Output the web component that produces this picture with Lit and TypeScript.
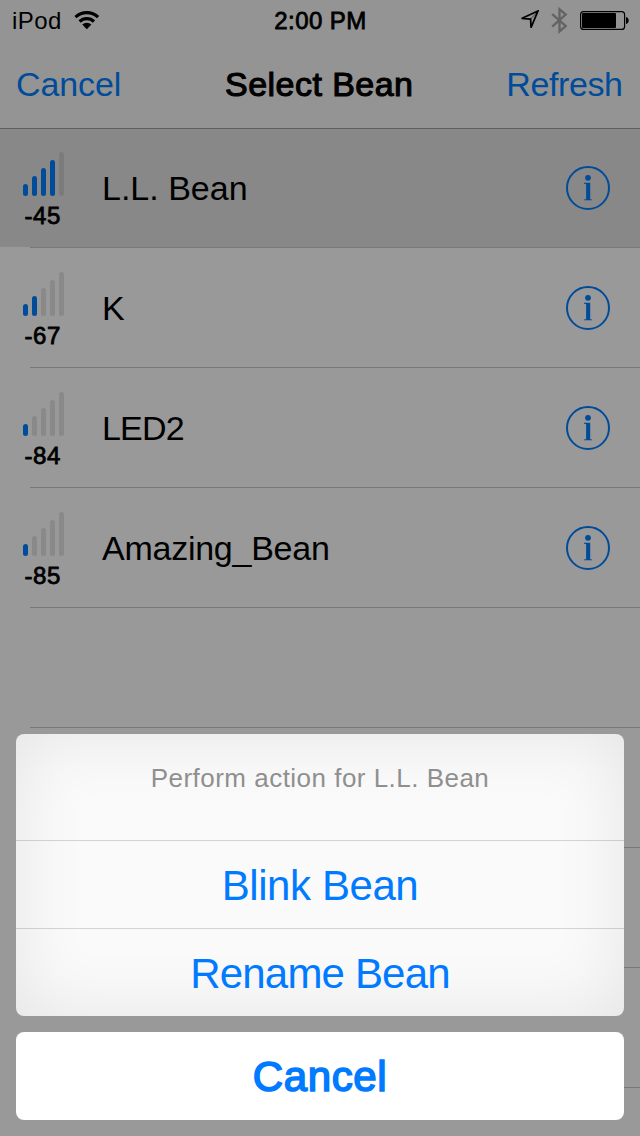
import { LitElement, html, css } from "lit";
import { customElement, property } from "lit/decorators.js";
import { classMap } from "lit/directives/class-map.js";

interface Bean {
  name: string;
  rssi: number;
  bars: number;
  tracking: number;
  selected?: boolean;
}

const BEANS: Bean[] = [
  { name: "L.L. Bean", rssi: -45, bars: 4, tracking: 0, selected: true },
  { name: "K", rssi: -67, bars: 2, tracking: 0 },
  { name: "LED2", rssi: -84, bars: 1, tracking: -0.8 },
  { name: "Amazing_Bean", rssi: -85, bars: 1, tracking: -0.25 },
];

@customElement("status-bar")
class StatusBar extends LitElement {
  static styles = css`
    :host {
      display: grid;
      grid-template-columns: 1fr auto 1fr;
      align-items: center;
      height: 40px;
      padding: 0 11px 0 12px;
      font-size: 24px;
      line-height: 40px;
      color: #000;
    }
    .left { display: flex; align-items: center; }
    .carrier { width: 62px; letter-spacing: 0.4px; height: 40px; padding-top: 2px; box-sizing: border-box; line-height: 38px; }
    .time { -webkit-text-stroke: 0.8px #000; letter-spacing: 0.45px; padding-top: 2px; line-height: 38px; }
    .right { display: flex; justify-content: flex-end; align-items: center; gap: 12px; }
    svg { display: block; }
  `;
  render() {
    return html`
      <div class="left">
        <span class="carrier">iPod</span>
        <svg width="26" height="40" viewBox="73.8 0 26 40" fill="none" stroke="#000" stroke-width="3.2">
          <path d="M75.3 17.1a16.4 16.4 0 0 1 22.6 0" />
          <path d="M79.4 21.5a10.3 10.3 0 0 1 14.4 0" />
          <path d="M86.6 29.2l-4.6-4.6a6.6 6.6 0 0 1 9.2 0z" fill="#000" stroke="none" />
        </svg>
      </div>
      <span class="time">2:00 PM</span>
      <div class="right">
        <svg width="20" height="40" viewBox="520 0 20 40">
          <path d="M538.9 11.1L522.6 18.5L531.6 19.1L532 27.6Z" fill="none" stroke="#000" stroke-width="1.7" />
          <path d="M538.9 11.1L531.6 19.1" stroke="#000" stroke-width="1" opacity="0.5" />
        </svg>
        <svg width="17" height="40" viewBox="551.5 0 17 40">
          <path d="M552.7 14.2L566.2 26L560 31.4V9.2L566.2 14.6L552.7 26.6" fill="none" stroke="#636363" stroke-width="2.3" />
        </svg>
        <svg width="49" height="40" viewBox="580 0 49 40">
          <rect x="580.6" y="11.6" width="44" height="17.8" rx="3" fill="none" stroke="#000" stroke-width="1.2" />
          <rect x="582" y="13" width="34" height="15" rx="1" />
          <path d="M626 17c3.6 .6 3.6 6.4 0 7z" />
        </svg>
      </div>
    `;
  }
}

@customElement("bean-row")
class BeanRow extends LitElement {
  @property({ attribute: false }) bean?: Bean;

  static styles = css`
    :host { display: block; }
    .row { display: flex; height: 119px; }
    .row.selected { background: #888; }
    .line { height: 1px; margin-left: 30px; background: #78777a; }
    .signal { width: 41px; margin-left: 23px; padding-top: 24px; }
    .bars { display: flex; align-items: flex-end; gap: 4px; height: 44px; }
    .bar { width: 5px; border-radius: 2.5px; background: #898989; }
    .selected .bar { background: #7b7b7b; }
    .bar.on, .selected .bar.on { background: #004c99; }
    .rssi {
      font-size: 24px;
      line-height: 28px;
      padding-top: 6px;
      margin-left: 1.5px;
      letter-spacing: 0.6px;
      -webkit-text-stroke: 0.8px #000;
    }
    .name { flex: 1; margin-left: 38px; font-size: 34px; line-height: 121px; white-space: nowrap; }
    .info { display: block; margin: 37px 29px 0 0; }
  `;
  render() {
    const b = this.bean;
    if (!b) return html`<div class="row"></div><div class="line"></div>`;
    return html`
      <div class=${classMap({ row: true, selected: !!b.selected })}>
        <div class="signal">
          <div class="bars">
            ${[12, 20, 28, 36, 44].map(
              (h, i) => html`<div class=${classMap({ bar: true, on: i < b.bars })} style="height:${h}px"></div>`
            )}
          </div>
          <div class="rssi">${b.rssi}</div>
        </div>
        <div class="name" style="letter-spacing:${b.tracking}px">${b.name}</div>
        <svg class="info" width="46" height="46" viewBox="-23 -23 46 46">
          <circle r="21" fill="none" stroke="#004c99" stroke-width="2" />
          <circle cy="-10.2" r="2.9" fill="#004c99" />
          <path d="M-4-5.2H2.2V11.2L4 11.4V12.3H-4V11.4L-1.9 11.2V-4L-4-4.3Z" fill="#004c99" />
        </svg>
      </div>
      <div class="line"></div>
    `;
  }
}

@customElement("action-sheet")
class ActionSheet extends LitElement {
  static styles = css`
    :host { display: flex; flex-direction: column; gap: 16px; text-align: center; color: #007aff; }
    .group {
      border-radius: 8px;
      height: 282px;
      background: #fafafa;
      box-shadow: inset 0 0 70px rgba(0, 0, 0, 0.09);
      overflow: hidden;
    }
    .title { height: 106px; line-height: 89px; font-size: 26px; letter-spacing: 0.48px; color: #8f8f8f; }
    .action {
      height: 88px;
      box-sizing: border-box;
      border-top: 1px solid rgba(60, 60, 67, 0.2);
      font-size: 42px;
      line-height: 90px;
    }
    .blink { letter-spacing: -0.42px; }
    .rename { letter-spacing: -0.82px; }
    .cancel {
      height: 88px;
      border-radius: 8px;
      background: #fff;
      font-size: 42px;
      line-height: 90px;
      letter-spacing: 0.65px;
      -webkit-text-stroke: 1.6px #007aff;
    }
  `;
  render() {
    return html`
      <div class="group">
        <div class="title">Perform action for L.L. Bean</div>
        <div class="action blink">Blink Bean</div>
        <div class="action rename">Rename Bean</div>
      </div>
      <div class="cancel">Cancel</div>
    `;
  }
}

@customElement("app-root")
class AppRoot extends LitElement {
  static styles = css`
    :host {
      display: block;
      position: relative;
      width: 640px;
      height: 1136px;
      overflow: hidden;
      background: #999;
      color: #000;
      font-family: "Liberation Sans", Arial, Helvetica, sans-serif;
    }
    .header { position: relative; height: 128px; background: #949494; border-bottom: 1px solid #5f5f61; margin-bottom: -1px; z-index: 1; }
    .nav {
      display: grid;
      grid-template-columns: 1fr auto 1fr;
      height: 88px;
      padding: 0 17.5px 0 16px;
      font-size: 34px;
      line-height: 88px;
    }
    .link { color: #004c99; }
    .cancel { letter-spacing: -0.1px; }
    .refresh { text-align: right; letter-spacing: -0.4px; }
    .heading { letter-spacing: 0.45px; -webkit-text-stroke: 1.1px #000; }
    .sheet { position: absolute; left: 16px; right: 16px; bottom: 16px; z-index: 2; }
  `;
  render() {
    return html`
      <div class="header">
        <status-bar></status-bar>
        <div class="nav">
          <span class="link cancel">Cancel</span>
          <span class="heading">Select Bean</span>
          <span class="link refresh">Refresh</span>
        </div>
      </div>
      <div class="list">
        ${BEANS.map((b) => html`<bean-row .bean=${b}></bean-row>`)}
        ${[0, 1, 2, 3].map(() => html`<bean-row></bean-row>`)}
      </div>
      <action-sheet class="sheet"></action-sheet>
    `;
  }
}
